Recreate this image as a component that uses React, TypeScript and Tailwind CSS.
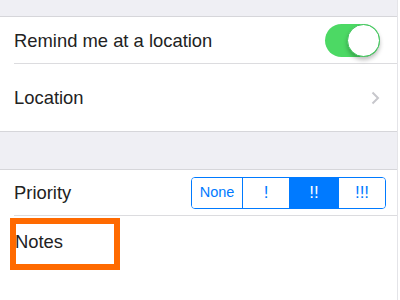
const font = { fontFamily: '"Liberation Sans", Arial, sans-serif' };

function Toggle() {
    return (
        <div className="relative w-[55px] h-[33px] rounded-full bg-[#4cd964]">
            <div className="absolute right-0 top-0 w-[33px] h-[33px] rounded-full bg-white border border-[#3ec45a] shadow-[0_3px_4px_rgba(0,0,0,0.25)]"></div>
        </div>
    );
}

function Chevron() {
    return (
        <svg width="9" height="14" viewBox="0 0 9 14" fill="none">
            <polyline points="1.5,1.5 7,7 1.5,12.5" stroke="#c7c7cc" strokeWidth="2" />
        </svg>
    );
}

function Segmented() {
    const items = [
        { label: 'None', w: 'w-[50px]', size: 'text-[14.5px]' },
        { label: '!', w: 'w-[47px]', size: 'text-[17px]' },
        { label: '!!', w: 'w-[49px]', size: 'text-[17px]', active: true },
        { label: '!!!', w: 'w-[47px]', size: 'text-[17px]' },
    ];
    return (
        <div className="flex h-[32px] rounded-[4px] border border-[#007aff] overflow-hidden">
            {items.map((it, i) => (
                <div
                    key={it.label}
                    className={`${it.w} ${it.size} flex items-center justify-center ${i > 0 ? 'border-l border-[#007aff]' : ''} ${it.active ? 'bg-[#007aff] text-white' : 'bg-white text-[#007aff]'}`}
                >
                    {it.label}
                </div>
            ))}
        </div>
    );
}

export default function App() {
    return (
        <div className="w-[400px] h-[300px] bg-white overflow-hidden flex text-[#222] text-[18.4px]" style={font}>
            <div className="w-[397px] flex flex-col">
                <div className="h-[17px] bg-[#efeff4] border-b border-[#d6d6da]"></div>

                <div className="bg-white pl-[14px]">
                    <div className="h-[47px] flex items-center justify-between pr-[17px] border-b border-[#dcdcdf]">
                        <span className="pt-[1px]">Remind me at a location</span>
                        <Toggle />
                    </div>
                    <div className="h-[67px] flex items-center justify-between pr-[17px]">
                        <span>Location</span>
                        <Chevron />
                    </div>
                </div>

                <div className="h-[39px] bg-[#efeff4] border-y border-[#d6d6da]"></div>

                <div className="bg-white pl-[14px]">
                    <div className="h-[46px] flex items-center justify-between pr-[11px] border-b border-[#dcdcdf]">
                        <span>Priority</span>
                        <Segmented />
                    </div>
                    <div className="relative h-[60px] pt-[12px] pl-[1px]">
                        <span>Notes</span>
                        <div className="absolute left-[-4px] top-[2px] w-[110px] h-[52px] border-[6px] border-[#ff6a00]"></div>
                    </div>
                </div>
            </div>
            <div className="w-[3px] border-l border-[#e4e4e8] bg-white"></div>
        </div>
    );
}
